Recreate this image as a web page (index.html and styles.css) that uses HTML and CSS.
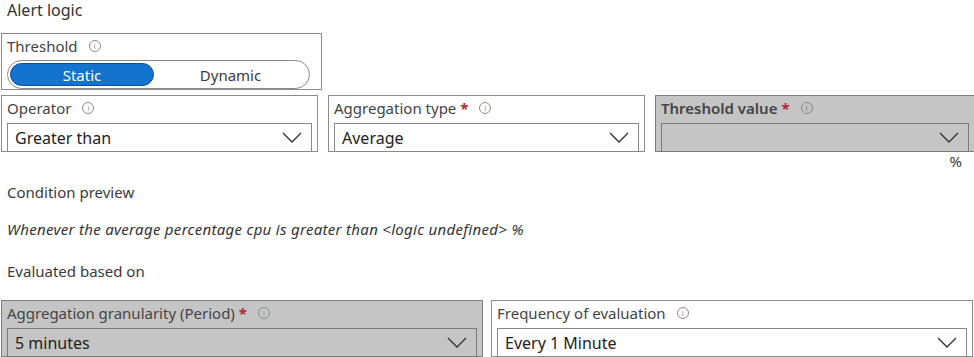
FILE: index.html
```html
<!DOCTYPE html>
<html lang="en">
<head>
    <meta charset="UTF-8">
    <title>Alert logic</title>
    <link rel="stylesheet" href="styles.css">
</head>
<body>
    <h2 class="title">Alert logic</h2>

    <!-- Threshold type -->
    <div class="field threshold">
        <div class="label">Threshold <span class="info">i</span></div>
        <div class="toggle">
            <button class="seg active">Static</button>
            <button class="seg">Dynamic</button>
        </div>
    </div>

    <div class="row row-three">
        <div class="field">
            <div class="label">Operator <span class="info">i</span></div>
            <div class="select"><span>Greater than</span><svg class="chev" viewBox="0 0 20 11"><polyline points="1,1 10,10 19,1"/></svg></div>
        </div>
        <div class="field">
            <div class="label">Aggregation type <span class="req">*</span> <span class="info">i</span></div>
            <div class="select"><span>Average</span><svg class="chev" viewBox="0 0 20 11"><polyline points="1,1 10,10 19,1"/></svg></div>
        </div>
        <div class="field disabled">
            <div class="label bold">Threshold value <span class="req">*</span> <span class="info">i</span></div>
            <div class="select"><span></span><svg class="chev" viewBox="0 0 20 11"><polyline points="1,1 10,10 19,1"/></svg></div>
        </div>
    </div>
    <div class="unit">%</div>

    <p class="section">Condition preview</p>
    <p class="preview">Whenever the average percentage cpu is greater than &lt;logic undefined&gt; %</p>
    <p class="section evaluated">Evaluated based on</p>

    <div class="row row-two">
        <div class="field disabled">
            <div class="label">Aggregation granularity (Period) <span class="req">*</span> <span class="info">i</span></div>
            <div class="select"><span>5 minutes</span><svg class="chev" viewBox="0 0 20 11"><polyline points="1,1 10,10 19,1"/></svg></div>
        </div>
        <div class="field">
            <div class="label">Frequency of evaluation <span class="info">i</span></div>
            <div class="select"><span>Every 1 Minute</span><svg class="chev" viewBox="0 0 20 11"><polyline points="1,1 10,10 19,1"/></svg></div>
        </div>
    </div>
</body>
</html>
```
FILE: styles.css
```css
body {
    margin: 0;
    width: 974px;
    height: 357px;
    overflow: hidden;
    background: #fff;
    color: #3a3a3a;
    font-family: "Noto Sans", "Open Sans", sans-serif;
    font-size: 15px;
}

.title {
    margin: 0 0 0 7px;
    padding-top: 1px;
    height: 32px;
    font-size: 16px;
    font-weight: normal;
    line-height: 18px;
    color: #333;
}

/* Field boxes */
.field {
    box-sizing: border-box;
    height: 57px;
    border: 1px solid #8c8c8c;
    background: #fff;
    padding: 1px 5px 0 5px;
}

.field.disabled {
    background: #c5c5c5;
    border-color: #7e7e7e;
}

.threshold {
    width: 321px;
    margin-left: 1px;
}

.label {
    display: flex;
    align-items: center;
    height: 22px;
    font-size: 15px;
    color: #444;
    white-space: nowrap;
}

.label.bold {
    font-weight: 600;
}

.req {
    color: #b02a37;
    margin-left: 4px;
    font-weight: bold;
}

.info {
    display: inline-flex;
    align-items: center;
    justify-content: center;
    box-sizing: border-box;
    width: 12px;
    height: 12px;
    margin-left: 11px;
    border: 1px solid #8a8a8a;
    border-radius: 50%;
    font-size: 7px;
    line-height: 1;
    color: #8a8a8a;
}

/* Static / Dynamic toggle */
.toggle {
    display: flex;
    box-sizing: border-box;
    width: 303px;
    height: 29px;
    margin-top: 3px;
    padding: 2px;
    border: 1px solid #8a8a8a;
    border-radius: 15px;
    background: #fff;
}

.seg {
    flex: 1;
    border: none;
    background: none;
    border-radius: 13px;
    font-family: inherit;
    font-size: 15px;
    color: #3a3a3a;
    padding: 0;
}

.seg.active {
    flex: 0 0 144px;
    background: #1473cf;
    color: #fff;
    border: 1px solid #0d4f91;
}

/* Selects */
.select {
    display: flex;
    align-items: center;
    justify-content: space-between;
    box-sizing: border-box;
    height: 29px;
    margin-top: 4px;
    padding: 0 9px 0 7px;
    border: 1px solid #8a8a8a;
    background: #fff;
    font-size: 16px;
    color: #222;
}

.disabled .select {
    background: #c5c5c5;
    border-color: #7a7a7a;
}

.chev {
    width: 20px;
    height: 11px;
    fill: none;
    stroke: #333;
    stroke-width: 1.4;
}

/* Rows */
.row {
    display: grid;
    padding-left: 1px;
}

.row-three {
    margin-top: 5px;
    grid-template-columns: 317px 317px 320px;
    column-gap: 10px;
}

.row-two {
    margin-top: 19px;
    grid-template-columns: 482px 482px;
    column-gap: 8px;
}

.unit {
    height: 18px;
    padding-right: 12px;
    text-align: right;
    font-size: 15px;
    line-height: 18px;
}

.section {
    margin: 12px 0 0 7px;
    height: 20px;
    font-size: 15px;
    line-height: 20px;
    color: #3a3a3a;
}

.preview {
    margin: 17px 0 0 7px;
    height: 20px;
    font-size: 15px;
    font-style: italic;
    letter-spacing: 0.3px;
    line-height: 20px;
    color: #333;
}

.evaluated {
    margin-top: 22px;
}
```
